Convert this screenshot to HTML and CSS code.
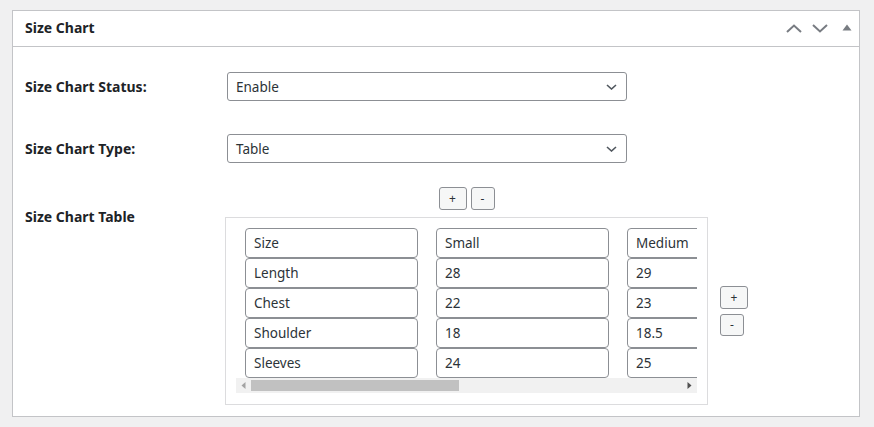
FILE: index.html
```html
<!DOCTYPE html>
<html>
<head>
<meta charset="utf-8">
<link rel="stylesheet" href="styles.css">
</head>
<body>
<div class="panel">
  <div class="panel-head">
    <h2 class="panel-title">Size Chart</h2>
    <div class="head-actions">
      <svg class="ico-chev" width="16" height="9" viewBox="0 0 16 9"><polyline points="1,8 8,1.5 15,8" fill="none" stroke="#787c82" stroke-width="2"/></svg>
      <svg class="ico-chev" width="16" height="9" viewBox="0 0 16 9"><polyline points="1,1 8,7.5 15,1" fill="none" stroke="#787c82" stroke-width="2"/></svg>
      <svg class="ico-tri" width="10" height="7" viewBox="0 0 10 7"><polygon points="0.5,6.5 5,0.5 9.5,6.5" fill="#787c82"/></svg>
    </div>
  </div>
  <div class="panel-body">
    <div class="row row-first">
      <div class="label">Size Chart Status:</div>
      <div class="select"><span>Enable</span><svg width="11" height="6" viewBox="0 0 11 6"><polyline points="1,1 5.5,5 10,1" fill="none" stroke="#50575e" stroke-width="1.6"/></svg></div>
    </div>
    <div class="row row-second">
      <div class="label">Size Chart Type:</div>
      <div class="select"><span>Table</span><svg width="11" height="6" viewBox="0 0 11 6"><polyline points="1,1 5.5,5 10,1" fill="none" stroke="#50575e" stroke-width="1.6"/></svg></div>
    </div>
    <div class="row row-table">
      <div class="label label-top">Size Chart Table</div>
      <div class="table-field">
        <div class="col-btns">
          <button class="btn btn-plus">+</button>
          <button class="btn btn-minus">-</button>
        </div>
        <div class="table-line">
          <div class="table-box">
            <div class="scroller">
              <div class="trow"><div class="cell">Size</div><div class="cell">Small</div><div class="cell">Medium</div></div>
              <div class="trow"><div class="cell">Length</div><div class="cell">28</div><div class="cell">29</div></div>
              <div class="trow"><div class="cell">Chest</div><div class="cell">22</div><div class="cell">23</div></div>
              <div class="trow"><div class="cell">Shoulder</div><div class="cell">18</div><div class="cell">18.5</div></div>
              <div class="trow"><div class="cell">Sleeves</div><div class="cell">24</div><div class="cell">25</div></div>
            </div>
            <div class="scrollbar">
              <div class="sb-arrow"><svg width="5" height="7" viewBox="0 0 5 7"><polygon points="4.5,0 4.5,7 0.5,3.5" fill="#a3a3a3"/></svg></div>
              <div class="sb-track"><div class="sb-thumb"></div></div>
              <div class="sb-arrow"><svg width="5" height="7" viewBox="0 0 5 7"><polygon points="0.5,0 0.5,7 4.5,3.5" fill="#505050"/></svg></div>
            </div>
          </div>
          <div class="row-btns">
            <button class="btn btn-plus">+</button>
            <button class="btn btn-minus btn-short">-</button>
          </div>
        </div>
      </div>
    </div>
  </div>
</div>
</body>
</html>
```

FILE: styles.css
```css
html, body {
  margin: 0;
  padding: 0;
}
body {
  background: #f0f0f1;
  font-family: "Noto Sans", "DejaVu Sans", sans-serif;
  color: #1d2327;
  padding: 10px 0 0 12px;
}
.panel {
  width: 846px;
  height: 405px;
  background: #fff;
  border: 1px solid #c3c4c7;
}
.panel-head {
  height: 35px;
  border-bottom: 1px solid #c3c4c7;
  display: flex;
  align-items: center;
  justify-content: space-between;
  padding: 0 7px 0 12px;
}
.panel-title {
  margin: 0;
  font-size: 14px;
  font-weight: 700;
  line-height: 20px;
  color: #1d2327;
  position: relative;
  top: -1px;
}
.head-actions {
  display: flex;
  align-items: center;
}
.ico-chev {
  margin-left: 10px;
  display: block;
}
.ico-tri {
  margin-left: 14px;
  display: block;
  position: relative;
  top: -1px;
}
.panel-body {
  padding: 25px 0 0 12px;
}
.row {
  display: grid;
  grid-template-columns: 202px 1fr;
  align-items: center;
}
.row-second {
  margin-top: 33px;
}
.row-table {
  margin-top: 24px;
  align-items: start;
}
.label {
  font-size: 14px;
  font-weight: 700;
  line-height: 20px;
  color: #1d2327;
}
.label-top {
  margin-top: 20px;
}
.select {
  box-sizing: border-box;
  width: 400px;
  height: 29px;
  border: 1px solid #8c8f94;
  border-radius: 3px;
  display: flex;
  align-items: center;
  justify-content: space-between;
  padding: 0 9px 0 8px;
  font-size: 13.5px;
  color: #2c3338;
}
.select svg {
  display: block;
}
.table-field {
  margin-left: -2px;
}
.col-btns {
  width: 483px;
  display: flex;
  justify-content: center;
  gap: 4px;
}
.btn {
  box-sizing: border-box;
  height: 23px;
  width: 28px;
  padding: 0;
  margin: 0;
  border: 1px solid #8c8f94;
  border-radius: 3px;
  background: #f6f7f7;
  font-family: "Noto Sans", "DejaVu Sans", sans-serif;
  font-size: 12px;
  line-height: 20px;
  color: #2c3338;
}
.btn-minus {
  width: 24px;
}
.btn-short {
  height: 22px;
}
.table-line {
  display: flex;
  align-items: center;
  margin-top: 7px;
}
.table-box {
  box-sizing: border-box;
  width: 483px;
  border: 1px solid #dcdcde;
  padding: 10px 10px 11px 10px;
}
.scroller {
  width: 461px;
  overflow: hidden;
}
.trow {
  display: flex;
  gap: 18px;
  padding-left: 9px;
  width: max-content;
}
.cell {
  box-sizing: border-box;
  flex: none;
  width: 173px;
  height: 30px;
  border: 1px solid #8c8f94;
  border-radius: 4px;
  padding: 0 8px;
  font-size: 13.5px;
  line-height: 28px;
  color: #2c3338;
}
.scrollbar {
  width: 461px;
  height: 15px;
  background: #f1f1f1;
  display: flex;
}
.sb-arrow {
  width: 15px;
  height: 15px;
  flex: none;
  display: flex;
  align-items: center;
  justify-content: center;
}
.sb-track {
  flex: 1;
  padding-top: 2px;
}
.sb-thumb {
  width: 208px;
  height: 11px;
  background: #c1c1c1;
}
.row-btns {
  display: flex;
  flex-direction: column;
  gap: 5px;
  margin-left: 12px;
}
```
